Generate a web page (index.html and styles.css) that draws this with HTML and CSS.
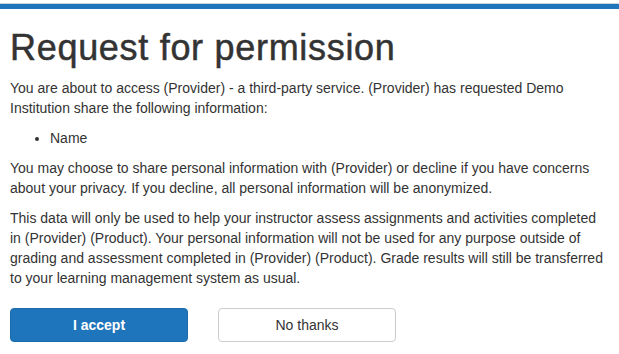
FILE: index.html
```html
<!DOCTYPE html>
<html lang="en">
<head>
<meta charset="utf-8">
<title>Request for permission</title>
<link rel="stylesheet" href="styles.css">
</head>
<body>
<div class="topbar"></div>
<main class="content">
  <h1 class="title">Request for permission</h1>
  <p class="para">You are about to access (Provider) - a third-party service. (Provider) has requested Demo Institution share the following information:</p>
  <ul class="info-list">
    <li>Name</li>
  </ul>
  <p class="para">You may choose to share personal information with (Provider) or decline if you have concerns about your privacy. If you decline, all personal information will be anonymized.</p>
  <p class="para">This data will only be used to help your instructor assess assignments and activities completed in (Provider) (Product). Your personal information will not be used for any purpose outside of grading and assessment completed in (Provider) (Product). Grade results will still be transferred to your learning management system as usual.</p>
  <div class="actions">
    <button class="btn btn-primary" type="button">I accept</button>
    <button class="btn btn-default" type="button">No thanks</button>
  </div>
</main>
</body>
</html>
```

FILE: styles.css
```css
html, body {
  margin: 0;
  padding: 0;
  background: #fff;
}
body {
  font-family: "Liberation Sans", Arial, Helvetica, sans-serif;
  font-size: 14px;
  line-height: 20px;
  color: #333;
}
.topbar {
  margin-top: 3px;
  border-top: 1px solid #c8d3dc;
  height: 5px;
  background: #1f75bb;
}
.content {
  padding: 0 10px;
}
.title {
  font-size: 36px;
  font-weight: 500;
  letter-spacing: 0.7px;
  -webkit-text-stroke: 0.5px #333;
  line-height: 40px;
  margin: 19px 0 10px;
  color: #333;
}
.para {
  margin: 0 0 10px;
}
.info-list {
  margin: 0 0 10px;
  padding-left: 40px;
}
.actions {
  display: flex;
  gap: 30px;
  margin-top: 20px;
}
.btn {
  width: 178px;
  height: 34px;
  border-radius: 4px;
  font-family: inherit;
  font-size: 14px;
  cursor: pointer;
}
.btn-primary {
  background: #1f75bb;
  border: 1px solid #1c6cad;
  color: #fff;
  font-weight: bold;
}
.btn-default {
  background: #fff;
  border: 1px solid #ccc;
  color: #333;
}
```
